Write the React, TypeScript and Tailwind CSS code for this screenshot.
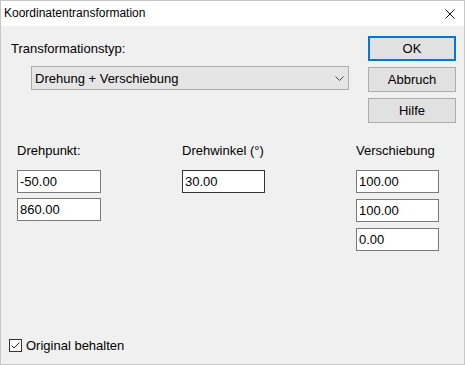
export default function App() {
  const fieldInput = 'h-[23px] bg-white border flex items-center pl-[2px] text-[13px]'

  return (
    <div className="w-[465px] h-[365px] bg-white text-black font-['Liberation_Sans',Arial,sans-serif]">
      <div className="w-full h-full border border-[#c6c6c6] flex flex-col">
        {/* title bar */}
        <div className="h-[25px] bg-white flex items-center justify-between pl-[3px] pr-[9px]">
          <span className="text-[12px] leading-[15px]">Koordinatentransformation</span>
          <svg width="10" height="10" viewBox="0 0 10 10">
            <path d="M0.5 0.5L9.5 9.5M9.5 0.5L0.5 9.5" stroke="#111" strokeWidth="1" fill="none" />
          </svg>
        </div>

        <div className="flex-1 bg-[#f0f0f0] flex flex-col text-[13px] leading-[15px]">
          {/* top row */}
          <div className="flex justify-between items-start">
            <div className="pt-[15px] pl-[10px]">
              <div>Transformationstyp:</div>
              <div className="mt-[10px] ml-[20px] w-[318px] h-[24px] bg-[#e5e5e5] border border-[#adadad] flex items-center justify-between pl-[3px] pr-[4px]">
                <span>Drehung + Verschiebung</span>
                <svg width="9" height="5" viewBox="0 0 9 5">
                  <path d="M0.5 0.5L4.5 4.5L8.5 0.5" stroke="#444" strokeWidth="1" fill="none" />
                </svg>
              </div>
            </div>
            <div className="pt-[10px] pr-[8px] flex flex-col gap-[6px]">
              <button className="w-[88px] h-[25px] bg-[#e1e1e1] border-2 border-[#0078d7] flex items-center justify-center">
                OK
              </button>
              <button className="w-[88px] h-[25px] bg-[#e1e1e1] border border-[#adadad] flex items-center justify-center">
                Abbruch
              </button>
              <button className="w-[88px] h-[25px] bg-[#e1e1e1] border border-[#adadad] flex items-center justify-center">
                Hilfe
              </button>
            </div>
          </div>

          {/* fields */}
          <div className="mt-[20px] pl-[16px] flex">
            <div className="w-[165px]">
              <div>Drehpunkt:</div>
              <div className="mt-[12px] flex flex-col gap-[5px]">
                <div className={`${fieldInput} w-[84px] border-[#7a7a7a]`}>-50.00</div>
                <div className={`${fieldInput} w-[84px] border-[#7a7a7a]`}>860.00</div>
              </div>
            </div>
            <div className="w-[174px]">
              <div>Drehwinkel (°)</div>
              <div className="mt-[12px]">
                <div className={`${fieldInput} w-[83px] border-[#333333]`}>30.00</div>
              </div>
            </div>
            <div className="w-[84px]">
              <div>Verschiebung</div>
              <div className="mt-[12px] flex flex-col gap-[6px]">
                <div className={`${fieldInput} w-[83px] border-[#7a7a7a]`}>100.00</div>
                <div className={`${fieldInput} w-[83px] border-[#7a7a7a]`}>100.00</div>
                <div className={`${fieldInput} w-[83px] border-[#7a7a7a]`}>0.00</div>
              </div>
            </div>
          </div>

          {/* checkbox */}
          <div className="mt-auto pl-[8px] pb-[11px] h-[26px] flex items-end">
            <div className="h-[15px] flex items-center gap-[4px]">
              <div className="w-[13px] h-[13px] bg-white border border-[#333333] flex items-center justify-center">
                <svg width="11" height="11" viewBox="0 0 11 11">
                  <path d="M1.5 5.5L4 8L9.5 2.5" stroke="#222" strokeWidth="1" fill="none" />
                </svg>
              </div>
              <span>Original behalten</span>
            </div>
          </div>
        </div>
      </div>
    </div>
  )
}
